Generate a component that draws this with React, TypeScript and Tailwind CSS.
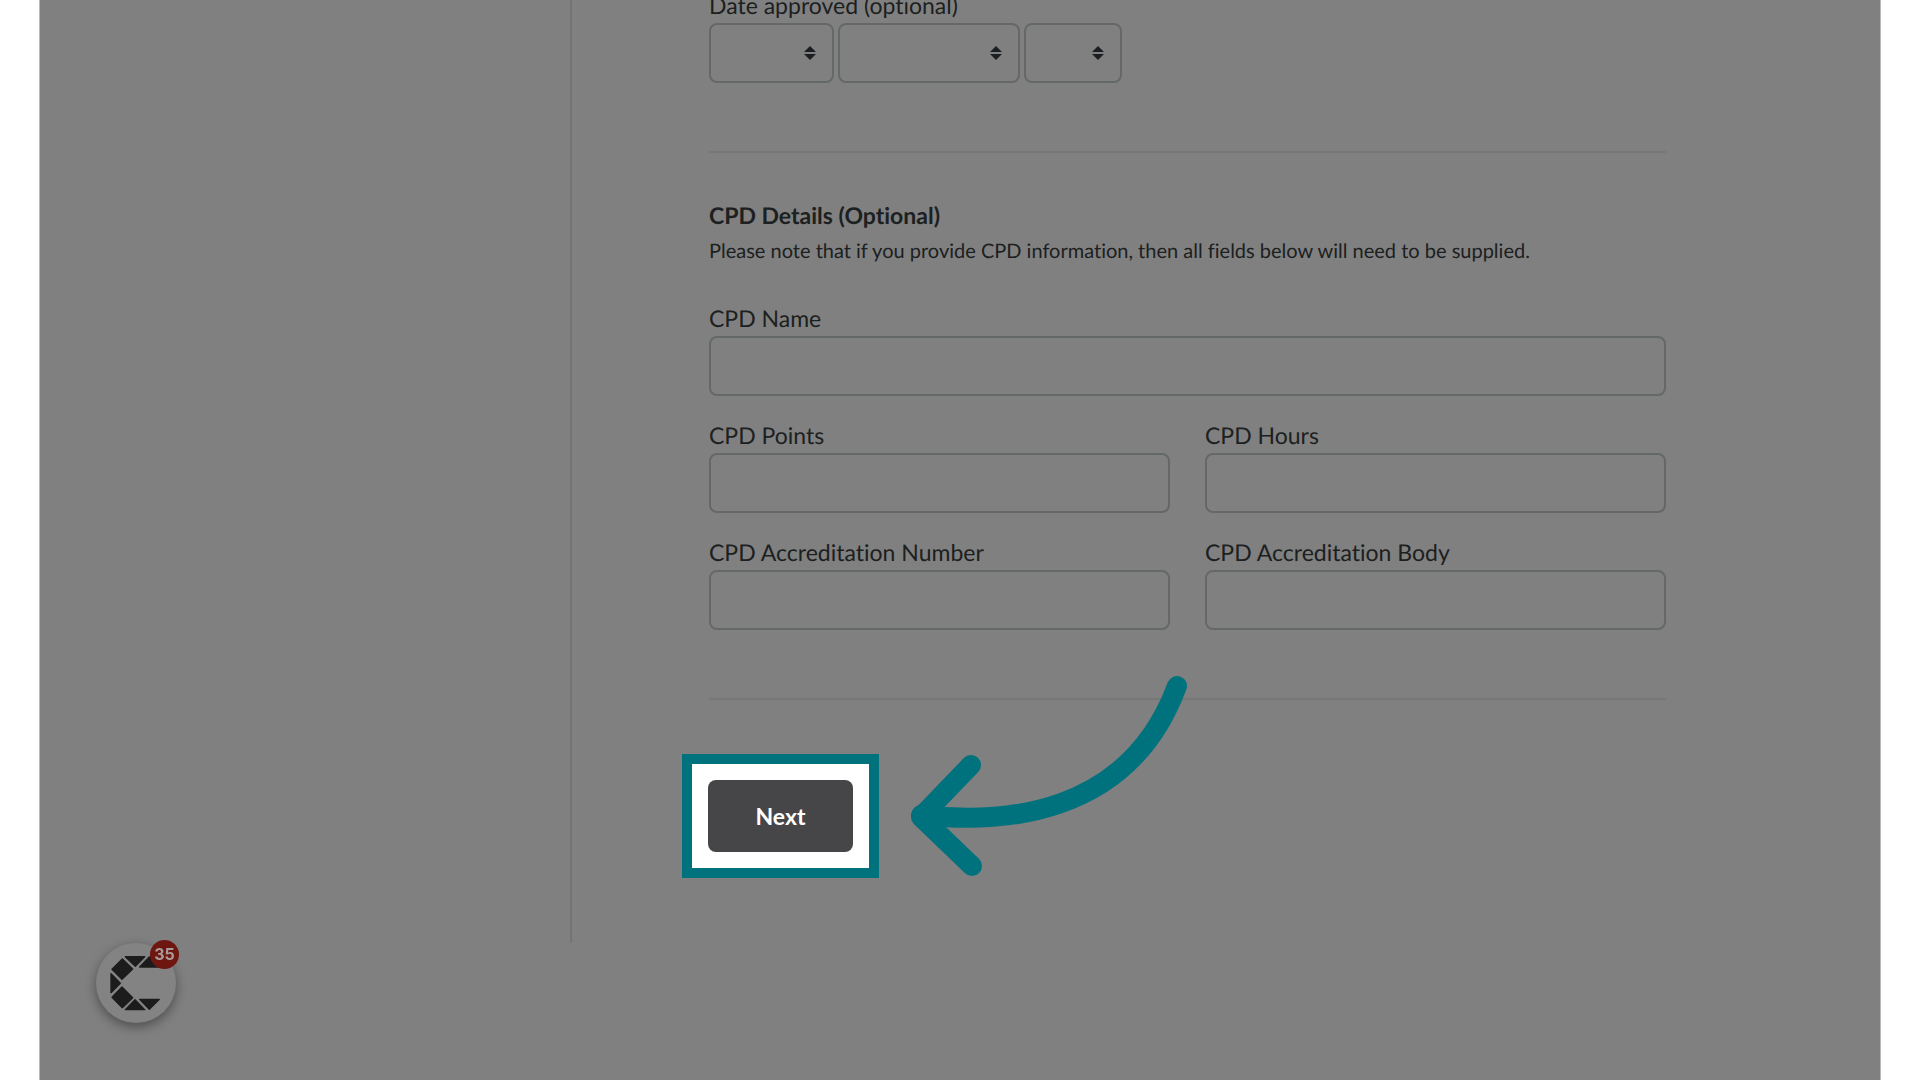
import { useState } from 'react';

const FONT = 'font-[Lato,"Open_Sans",sans-serif] [text-rendering:geometricPrecision] [font-variant-ligatures:none]';

const MONTHS = [
    'January', 'February', 'March', 'April', 'May', 'June',
    'July', 'August', 'September', 'October', 'November', 'December',
];
const DAYS = Array.from({ length: 31 }, (_, i) => String(i + 1));
const YEARS = Array.from({ length: 10 }, (_, i) => String(2015 + i));

interface FieldProps {
    id: string;
    label: string;
    className?: string;
}

const Field = ({ id, label, className = '' }: FieldProps) => {
    const [value, setValue] = useState('');

    return (
        <div className={className}>
            <label htmlFor={id} className="block text-[23px] leading-7 mb-1">{label}</label>
            <input
                id={id}
                type="text"
                className="block w-full h-[60px] px-4 text-[23px] bg-transparent border-2 border-[#656868] rounded-lg outline-none"
                value={value}
                onChange={e => setValue(e.target.value)}
            />
        </div>
    );
};

interface DateSelectProps {
    label: string;
    options: string[];
    className: string;
}

const DateSelect = ({ label, options, className }: DateSelectProps) => (
    <div className={`relative ${className}`}>
        <select
            aria-label={label}
            className="block w-full h-[60px] pl-4 pr-9 text-[23px] bg-transparent border-2 border-[#656868] rounded-lg outline-none appearance-none cursor-pointer"
        >
            <option value=""></option>
            {options.map(o => <option key={o} value={o}>{o}</option>)}
        </select>
        <svg className="absolute right-[18px] top-1/2 -translate-y-1/2 pointer-events-none" width="12" height="16" viewBox="0 0 12 16" fill="#1b1e22">
            <path d="M6 1 L12 7 H0 Z" />
            <path d="M6 15 L12 9 H0 Z" />
        </svg>
    </div>
);

const Arrow = () => (
    <svg
        className="absolute left-[198px] -top-[104px] pointer-events-none"
        width="320" height="230" viewBox="0 0 320 230"
        fill="none" stroke="#00727e" strokeWidth="20" strokeLinecap="round" strokeLinejoin="round"
    >
        <path d="M31 155 C110 164 238 158 287 26" />
        <path d="M81 105 L31 157 L82 206" />
    </svg>
);

const HelpLauncher = () => (
    <button type="button" aria-label="Help" className="fixed left-24 bottom-[57px] w-20 h-20 rounded-full bg-[#838383] shadow-[0_4px_12px_rgba(0,0,0,0.4)] cursor-pointer">
        <svg width="80" height="80" viewBox="0 0 240 240" fill="#1c1c1c" stroke="#1c1c1c" strokeWidth="4" strokeLinejoin="round">
            <path d="M88 41 H146 L118 70 Z" />
            <path d="M131 72 L160 42 H190 V72 Z" />
            <path d="M79 48 L110 78 L78 109 L48 79 Z" />
            <path d="M45 92 L73 121 L45 149 Z" />
            <path d="M78 132 L110 164 L79 194 L48 163 Z" />
            <path d="M88 200 L117 170 L146 200 Z" />
            <path d="M131 169 H190 L160 199 Z" />
        </svg>
        <span className="absolute -top-[3px] -right-[3px] w-[29px] h-[29px] rounded-full bg-[#6e1610] text-[#a89c9b] font-[Inter,sans-serif] font-bold text-[16px] leading-[29px] text-center">35</span>
    </button>
);

const App = () => {
    return (
        <div className="min-h-screen bg-white px-[39px] flex">
            <div className={`flex-1 bg-[#808080] border-x border-[#b8b8b8] text-[#1c2020] overflow-hidden ${FONT}`}>
                <div className="flex">
                    <aside className="w-[530px] shrink-0" />
                    <form className="flex-1 border-l-2 border-[#747474] pl-[137px] pr-[214px] pb-[65px]" onSubmit={e => e.preventDefault()}>
                        {/* scrolled part way down, so the first label is cut by the top edge */}
                        <fieldset className="-mt-[9px]">
                            <legend className="text-[23px] leading-7 mb-1">Date approved (optional)</legend>
                            <div className="flex gap-1">
                                <DateSelect label="Day" options={DAYS} className="w-[125px]" />
                                <DateSelect label="Month" options={MONTHS} className="w-[182px]" />
                                <DateSelect label="Year" options={YEARS} className="w-[98px]" />
                            </div>
                        </fieldset>

                        <hr className="mt-17 border-t-2 border-[#777777]" />

                        <h2 className="mt-12 text-[23px] leading-7 font-bold">CPD Details (Optional)</h2>
                        <p className="mt-2 text-[20px] leading-7">
                            Please note that if you provide CPD information, then all fields below will need to be supplied.
                        </p>

                        <div className="mt-[39px] grid grid-cols-2 gap-x-[35px] gap-y-[25px]">
                            <Field id="cpd-name" label="CPD Name" className="col-span-2" />
                            <Field id="cpd-points" label="CPD Points" />
                            <Field id="cpd-hours" label="CPD Hours" />
                            <Field id="cpd-number" label="CPD Accreditation Number" />
                            <Field id="cpd-body" label="CPD Accreditation Body" />
                        </div>

                        <hr className="mt-17 border-t-2 border-[#777777]" />

                        <div className="relative w-fit mt-[54px] -ml-[27px] p-4 bg-white border-10 border-[#00727e]">
                            <button type="submit" className="block w-[145px] h-[72px] rounded-lg bg-[#464648] text-white text-[23px] font-bold cursor-pointer">
                                Next
                            </button>
                            <Arrow />
                        </div>
                    </form>
                </div>
                <HelpLauncher />
            </div>
        </div>
    );
};

export default App;
